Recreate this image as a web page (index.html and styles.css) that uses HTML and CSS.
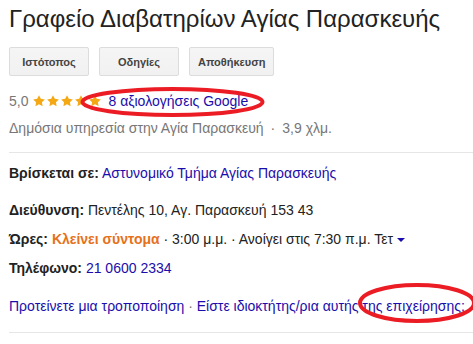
FILE: index.html
```html
<!DOCTYPE html>
<html lang="el">
<head>
  <meta charset="UTF-8">
  <meta name="viewport" content="width=device-width, initial-scale=1.0">
  <title>Γραφείο Διαβατηρίων Αγίας Παρασκευής</title>
  <link rel="stylesheet" href="styles.css">
</head>
<body>
  <div class="card">
    <h1 class="title">Γραφείο Διαβατηρίων Αγίας Παρασκευής</h1>

    <div class="actions">
      <button class="action">Ιστότοπος</button>
      <button class="action">Οδηγίες</button>
      <button class="action">Αποθήκευση</button>
    </div>

    <div class="rating">
      <span class="score">5,0</span>
      <span class="stars">
        <svg class="star" viewBox="0 0 24 24"><path d="M12 2l3.09 6.26L22 9.27l-5 4.87 1.18 6.88L12 17.77l-6.18 3.25L7 14.14 2 9.27l6.91-1.01z"/></svg>
        <svg class="star" viewBox="0 0 24 24"><path d="M12 2l3.09 6.26L22 9.27l-5 4.87 1.18 6.88L12 17.77l-6.18 3.25L7 14.14 2 9.27l6.91-1.01z"/></svg>
        <svg class="star" viewBox="0 0 24 24"><path d="M12 2l3.09 6.26L22 9.27l-5 4.87 1.18 6.88L12 17.77l-6.18 3.25L7 14.14 2 9.27l6.91-1.01z"/></svg>
        <svg class="star" viewBox="0 0 24 24"><path d="M12 2l3.09 6.26L22 9.27l-5 4.87 1.18 6.88L12 17.77l-6.18 3.25L7 14.14 2 9.27l6.91-1.01z"/></svg>
        <svg class="star" viewBox="0 0 24 24"><path d="M12 2l3.09 6.26L22 9.27l-5 4.87 1.18 6.88L12 17.77l-6.18 3.25L7 14.14 2 9.27l6.91-1.01z"/></svg>
      </span>
      <a class="link" href="#">8 αξιολογήσεις Google</a>
    </div>
    <div class="category">Δημόσια υπηρεσία στην Αγία Παρασκευή<span class="dot">·</span>3,9 χλμ.</div>

    <div class="details">
      <div class="row row-first"><b>Βρίσκεται σε:</b> <a class="link" href="#">Αστυνομικό Τμήμα Αγίας Παρασκευής</a></div>
      <div class="row"><b>Διεύθυνση:</b> Πεντέλης 10, Αγ. Παρασκευή 153 43</div>
      <div class="row"><b>Ώρες:</b> <b class="closing">Κλείνει σύντομα</b> · 3:00 μ.μ. · Ανοίγει στις 7:30 π.μ. Τετ <span class="caret"></span></div>
      <div class="row"><b>Τηλέφωνο:</b> <a class="link" href="#">21 0600 2334</a></div>
    </div>

    <div class="edits">
      <a class="link" href="#">Προτείνετε μια τροποποίηση</a> · <a class="link" href="#">Είστε ιδιοκτήτης/ρια αυτής της επιχείρησης;</a>
    </div>
  </div>

  <svg class="marks" width="473" height="344" viewBox="0 0 473 344">
    <ellipse cx="172.5" cy="102" rx="90" ry="13" />
    <ellipse cx="417" cy="303" rx="57" ry="18" />
  </svg>
</body>
</html>
```

FILE: styles.css
```css
body {
  margin: 0;
  background: #ffffff;
  color: #222222;
  font-family: "Liberation Sans", Arial, sans-serif;
  font-size: 14px;
}

.card {
  padding: 4px 0 0 9px;
}

.title {
  margin: 0;
  font-size: 24px;
  font-weight: normal;
  line-height: 30px;
  color: #222222;
}

.actions {
  display: flex;
  gap: 10px;
  margin-top: 13px;
}

.action {
  box-sizing: border-box;
  min-width: 80px;
  height: 29px;
  padding: 0 8px;
  font-family: "Liberation Sans", Arial, sans-serif;
  font-size: 11px;
  font-weight: bold;
  color: #444444;
  background: linear-gradient(#f5f5f5, #f1f1f1);
  border: 1px solid #dcdcdc;
  border-radius: 2px;
}

.rating {
  display: flex;
  align-items: center;
  margin-top: 17px;
  line-height: 16px;
}

.score {
  color: #777777;
}

.stars {
  display: flex;
  margin: 0 6px 0 4px;
}

.star {
  width: 14px;
  height: 14px;
  fill: #f4a814;
}

.link {
  color: #1a0dab;
  text-decoration: none;
}

.category {
  margin-top: 11px;
  color: #777777;
  line-height: 16px;
}

.dot {
  margin: 0 7px;
}

.details {
  margin-top: 16px;
  border-top: 1px solid #e6e6e6;
}

.row {
  line-height: 16px;
  margin-top: 13px;
}

.row-first {
  margin-top: 12px;
  margin-bottom: 21px;
}

.closing {
  color: #e7711b;
}

.caret {
  display: inline-block;
  width: 0;
  height: 0;
  border-left: 4px solid transparent;
  border-right: 4px solid transparent;
  border-top: 4px solid #1a0dab;
  vertical-align: middle;
}

.edits {
  margin-top: 22px;
  padding-bottom: 18px;
  line-height: 16px;
  color: #777777;
  border-bottom: 1px solid #e6e6e6;
}

.marks {
  position: absolute;
  top: 0;
  left: 0;
  pointer-events: none;
}

.marks ellipse {
  fill: none;
  stroke: #ec1c24;
  stroke-width: 4;
}
```
